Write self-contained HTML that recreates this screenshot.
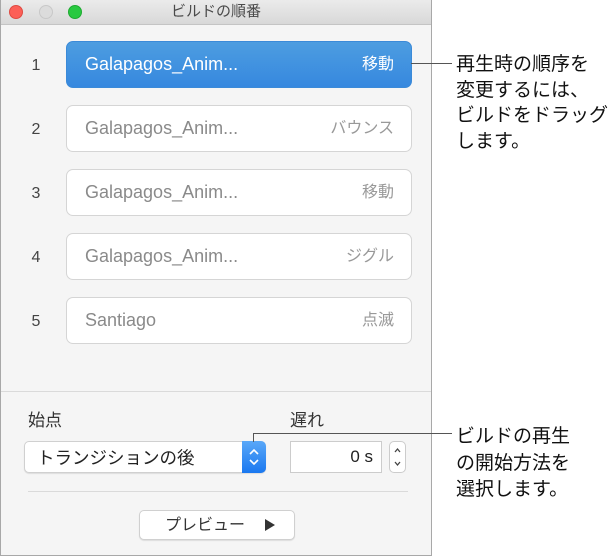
<!DOCTYPE html>
<html><head><meta charset="utf-8"><style>
body{margin:0;width:612px;height:558px;background:#fff;position:relative;overflow:hidden;font-family:"Liberation Sans","Noto Sans CJK JP",sans-serif}
.win{position:absolute;left:0;top:0;width:430px;height:555px;background:#f5f5f5;border:1px solid #a8a8a8;border-top:none;box-sizing:content-box}
.title{position:absolute;left:0;top:0;width:430px;height:24px;background:linear-gradient(#ebebeb,#d8d8d8);border-bottom:1px solid #c4c4c4;text-align:center;font-size:15px;line-height:24px;color:#4a4a4a}
.dot{position:absolute;top:5px;width:14px;height:14px;border-radius:50%;box-sizing:border-box}
.num{position:absolute;left:28px;width:14px;text-align:center;font-size:16px;line-height:20px;color:#444}
.row{position:absolute;left:65px;width:346px;height:47px;border:1px solid #d5d5d5;border-radius:7px;background:#fff;box-sizing:border-box;font-size:18px;color:#8a8a8a;line-height:45px}
.row .n{position:absolute;left:18px;top:0}
.row .e{position:absolute;right:17px;top:0;font-size:16px;color:#999}
.row.sel{background:linear-gradient(#4d9de0,#3688df);border-color:#3b8ad8;color:#fff}
.row.sel .e{color:#fff}
.hl{position:absolute;height:1px;background:#dadada}
.co{position:absolute;left:456px;font-size:19px;line-height:25.5px;color:#111;white-space:nowrap}
.ln{position:absolute;background:#555}
</style></head><body>
<div class="win">
<div class="title">ビルドの順番
<div class="dot" style="left:8px;background:#fc5f57;border:0.5px solid #de4a42"></div>
<div class="dot" style="left:38px;background:#dcdcdc;border:0.5px solid #c8c8c8"></div>
<div class="dot" style="left:67px;background:#29c940;border:0.5px solid #1eaa31"></div>
</div>
<div class="num" style="top:56px">1</div>
<div class="num" style="top:120px">2</div>
<div class="num" style="top:184px">3</div>
<div class="num" style="top:248px">4</div>
<div class="num" style="top:312px">5</div>
<div class="row sel" style="top:41px"><span class="n">Galapagos_Anim...</span><span class="e">移動</span></div>
<div class="row" style="top:105px"><span class="n">Galapagos_Anim...</span><span class="e">バウンス</span></div>
<div class="row" style="top:169px"><span class="n">Galapagos_Anim...</span><span class="e">移動</span></div>
<div class="row" style="top:233px"><span class="n">Galapagos_Anim...</span><span class="e">ジグル</span></div>
<div class="row" style="top:297px"><span class="n">Santiago</span><span class="e">点滅</span></div>
<div class="hl" style="left:0;width:430px;top:391px"></div>
<div style="position:absolute;left:27px;top:410px;font-size:17px;line-height:22px;color:#333">始点</div>
<div style="position:absolute;left:289px;top:410px;font-size:17px;line-height:22px;color:#333">遅れ</div>
<div style="position:absolute;left:23px;top:441px;width:242px;height:32px;background:#fff;border:1px solid #d0d0d0;border-radius:5px;box-sizing:border-box;box-shadow:0 1px 1px rgba(0,0,0,.1)">
<span style="position:absolute;left:12px;top:1px;font-size:17.5px;line-height:30px;color:#222">トランジションの後</span>
<div style="position:absolute;right:-1px;top:-1px;width:24px;height:32px;background:linear-gradient(#5aa8f8,#1a78f0);border-radius:0 5px 5px 0">
<svg width="24" height="32" viewBox="0 0 24 32"><path d="M8 13l4-4 4 4M8 19l4 4 4-4" stroke="#fff" stroke-width="1.6" fill="none"/></svg></div></div>
<div style="position:absolute;left:289px;top:441px;width:92px;height:32px;background:#fff;border:1px solid #ccc;box-sizing:border-box;text-align:right;padding-right:8px;font-size:17px;line-height:30px;color:#222">0 s</div>
<div style="position:absolute;left:388px;top:441px;width:17px;height:32px;background:#fff;border:1px solid #ccc;border-radius:5px;box-sizing:border-box">
<svg width="15" height="30" viewBox="0 0 15 30"><path d="M5 10l2.5-3 2.5 3M5 20l2.5 3 2.5-3" stroke="#444" stroke-width="1.3" fill="none"/></svg></div>
<div class="hl" style="left:27px;width:380px;top:491px"></div>
<div style="position:absolute;left:138px;top:510px;width:156px;height:30px;background:#fff;border:1px solid #d0d0d0;border-radius:5px;box-sizing:border-box;box-shadow:0 1px 1px rgba(0,0,0,.1);font-size:16px;line-height:28px;color:#333">
<span style="position:absolute;left:25px;top:1px">プレビュー</span>
<svg style="position:absolute;left:124px;top:8px" width="12" height="12" viewBox="0 0 12 12"><path d="M1 0L11 6L1 12Z" fill="#333"/></svg></div>
</div>
<div class="ln" style="left:411px;top:63px;width:41px;height:1px"></div>
<div class="co" style="top:52px">再生時の順序を<br>変更するには、<br>ビルドをドラッグ<br>します。</div>
<div class="ln" style="left:253px;top:433px;width:1px;height:9px"></div>
<div class="ln" style="left:253px;top:433px;width:199px;height:1px"></div>
<div class="co" style="top:424px;line-height:26.5px">ビルドの再生<br>の開始方法を<br>選択します。</div>
</body></html>
